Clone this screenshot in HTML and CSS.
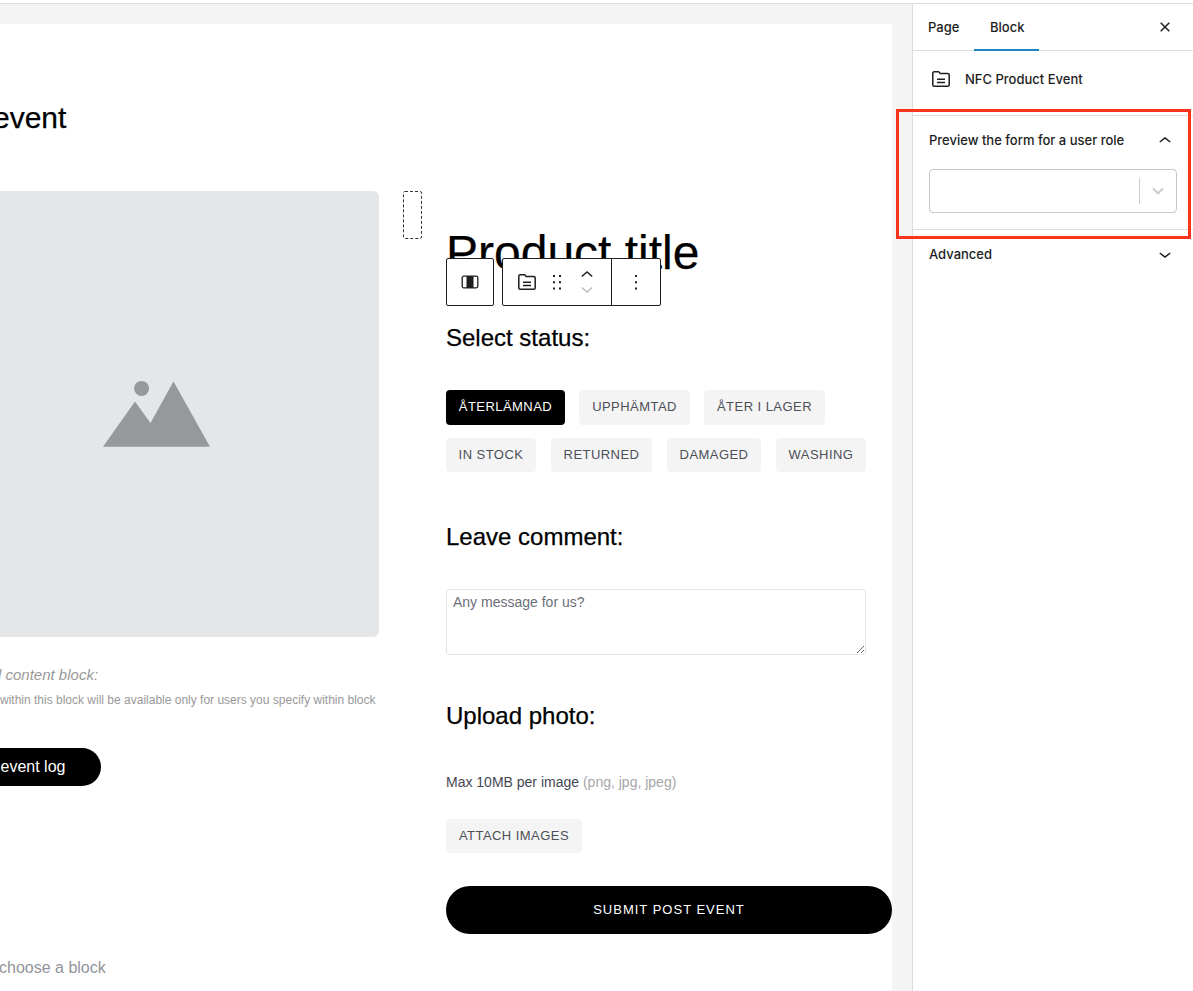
FILE: index.html
```html
<!DOCTYPE html>
<html lang="en">
<head>
<meta charset="utf-8">
<title>Edit page</title>
<link rel="stylesheet" href="styles.css">
</head>
<body>
<header class="topbar"></header>
<div class="editor">
  <main class="canvas">
    <div class="page">
      <h2 class="page-title">event</h2>
      <div class="columns">
        <section class="col-media">
          <div class="placeholder">
            <svg class="placeholder-art" width="107" height="67" viewBox="0 0 107 67"><circle cx="38.6" cy="8.4" r="7.5"/><path d="M0 66.8 32 21.5 47.5 43 70.5 1.500 107 66.800Z"/></svg>
          </div>
          <p class="restricted-title">l content block:</p>
          <p class="restricted-note">within this block will be available only for users you specify within block</p>
          <button class="log-button">event log</button>
          <p class="appender">choose a block</p>
        </section>
        <div class="empty-column"><svg width="19" height="48" viewBox="0 0 19 48"><rect x=".5" y=".5" width="18" height="47" rx="1.500"/></svg></div>
        <section class="col-form">
          <h1 class="product-title">Product title</h1>
          <div class="toolbar">
            <div class="tool-group tool-parent">
              <svg width="18" height="14" viewBox="0 0 18 14"><rect x="1.200" y="1.200" width="15.600" height="11.600" rx="1.500" fill="none" stroke="#1e1e1e" stroke-width="1.300"/><path d="M5.500 1h7v12h-7z" fill="#1e1e1e"/></svg>
            </div>
            <div class="tool-group tool-main">
              <div class="tool-block">
                <svg class="folder" width="20" height="18" viewBox="0 0 20 18"><path class="line" d="M1.800 3.200q0-1.500 1.500-1.500h4q.6 0 1 .6l.8 1.200h7.600q1.500 0 1.500 1.500v9.800q0 1.500-1.500 1.500H3.300q-1.500 0-1.500-1.500z"/><path class="line" d="M6 9.200h8M6 12.500h8"/></svg>
                <svg width="10" height="15" viewBox="0 0 10 15"><path d="M1 0h2v2H1zM7 0h2v2H7zM1 6.300h2v2H1zM7 6.300h2v2H7zM1 12.500h2v2H1zM7 12.500h2v2H7z" fill="#1e1e1e"/></svg>
                <svg class="movers" width="12" height="24" viewBox="0 0 12 24"><path class="line" d="M.8 6.500 6 2l5.200 4.500"/><path class="line faded" d="M.8 17.500 6 22l5.200-4.500"/></svg>
              </div>
              <div class="tool-more"><svg width="4" height="15" viewBox="0 0 4 15"><path d="M1 0h2v2H1zM1 6.300h2v2H1zM1 12.500h2v2H1z" fill="#1e1e1e"/></svg></div>
            </div>
          </div>
          <h3 class="section-title status-title">Select status:</h3>
          <div class="chips chips-first">
            <button class="chip chip-active">ÅTERLÄMNAD</button>
            <button class="chip chip-picked">UPPHÄMTAD</button>
            <button class="chip chip-restock">ÅTER I LAGER</button>
          </div>
          <div class="chips chips-second">
            <button class="chip chip-stock">IN STOCK</button>
            <button class="chip chip-returned">RETURNED</button>
            <button class="chip chip-damaged">DAMAGED</button>
            <button class="chip chip-washing">WASHING</button>
          </div>
          <h3 class="section-title comment-title">Leave comment:</h3>
          <textarea class="comment" placeholder="Any message for us?"></textarea>
          <h3 class="section-title upload-title">Upload photo:</h3>
          <p class="hint">Max 10MB per image <span class="hint-types">(png, jpg, jpeg)</span></p>
          <button class="chip attach">ATTACH IMAGES</button>
          <button class="submit">SUBMIT POST EVENT</button>
        </section>
      </div>
    </div>
  </main>
  <aside class="sidebar">
    <nav class="tabs">
      <a class="tab tab-page">Page</a>
      <a class="tab tab-block">Block</a>
      <svg class="close" width="10" height="10" viewBox="0 0 10 10"><path class="line" d="M.7.7l8.600 8.600M9.300.7.7 9.300"/></svg>
    </nav>
    <div class="block-card">
      <svg class="folder" width="20" height="18" viewBox="0 0 20 18"><path class="line" d="M1.800 3.200q0-1.500 1.500-1.500h4q.6 0 1 .6l.8 1.200h7.600q1.500 0 1.500 1.500v9.800q0 1.500-1.500 1.500H3.300q-1.500 0-1.500-1.500z"/><path class="line" d="M6 9.200h8M6 12.500h8"/></svg>
      <span class="block-name">NFC Product Event</span>
    </div>
    <section class="panel panel-role">
      <div class="panel-head"><span class="role-label">Preview the form for a user role</span><svg width="12" height="7" viewBox="0 0 12 7"><path class="line" d="M.8 5 6 .9l5.200 4.100"/></svg></div>
      <div class="select"><div class="select-arrow"><svg width="12" height="8" viewBox="0 0 12 8"><path d="M1.500 2 6 6.300l4.500-4.300"/></svg></div></div>
    </section>
    <section class="panel panel-advanced">
      <div class="panel-head"><span class="advanced-label">Advanced</span><svg width="12" height="7" viewBox="0 0 12 7"><path class="line" d="M.8 2 6 6.100l5.200-4.100"/></svg></div>
    </section>
  </aside>
</div>
<div class="highlight"></div>
</body>
</html>
```
FILE: styles.css
```css
* { box-sizing: border-box; }
body { margin: 0; width: 1193px; height: 991px; overflow: hidden; position: relative; background: #fff; font-family: "Liberation Sans", Arial, sans-serif; color: #000; }
h1, h2, h3, p { margin: 0; font-weight: 400; white-space: nowrap; }
h1, h2, h3 { -webkit-text-stroke: .25px #000; }
button { border: 0; padding: 0; font-family: inherit; text-align: center; white-space: nowrap; }
svg { display: block; flex: none; }
.line { fill: none; stroke: #1e1e1e; stroke-width: 1.5; }
.faded { stroke: #bbb; }
.topbar { height: 4px; border-bottom: 1px solid #ddd; }
.editor { display: flex; height: 987px; }
.canvas { width: 912px; padding: 20px 20px 0 0; background: #f4f4f4; overflow: hidden; }
.page { height: 967px; padding-top: 76px; background: #fff; }
.page-title { margin-left: -7px; font-size: 30px; line-height: 36px; }
.columns { display: flex; gap: 24px; margin-top: 55px; }

.col-media { width: 379px; flex: none; }
.placeholder { display: flex; height: 446px; padding: 189px 0 0 103px; background: #e5e6e8; border-radius: 0 6px 6px 0; }
.placeholder-art { fill: #97989b; }
.restricted-title { margin: 28px 0 0 -2px; font-size: 15px; line-height: 20px; font-style: italic; color: #999; }
.restricted-note { margin-top: 7px; font-size: 12px; line-height: 16px; color: #999; }
.log-button { display: block; width: 101px; height: 38px; margin-top: 40px; padding-right: 35px; border-radius: 0 19px 19px 0; background: #000; color: #fff; font-size: 16px; }
.appender { margin: 172px 0 0 -1px; font-size: 16px; line-height: 20px; color: #919499; }
.empty-column { width: 19px; flex: none; }
.empty-column rect { fill: none; stroke: #333; stroke-width: 1; stroke-dasharray: 3 2; }

.col-form { position: relative; width: 446px; padding-top: 38px; flex: none; }
.product-title { font-size: 48px; line-height: 48px; }
.section-title { font-size: 24px; line-height: 28px; }
.status-title { margin-top: 47px; }
.chips { display: flex; }
.chips-first { margin-top: 38px; gap: 14px; }
.chips-second { margin-top: 13px; gap: 15px; }
.chip { display: block; height: 34px; padding-bottom: 1px; border-radius: 4px; background: #f4f4f4; color: #4c4f58; font-size: 13px; letter-spacing: .45px; }
.chips-first .chip { height: 35px; padding-bottom: 2px; }
.chips-first .chip-active { width: 119px; background: #000; color: #fff; }
.chip-picked { width: 111px; }
.chip-restock { width: 121px; }
.chip-stock { width: 90px; }
.chip-returned { width: 101px; }
.chip-damaged { width: 94px; }
.chip-washing { width: 90px; }
.comment-title { margin-top: 51px; }
.comment { display: block; width: 420px; height: 66px; margin-top: 38px; padding: 4px 6px; border: 1px solid #e5e6e8; border-radius: 3px; background: #fff; font: 14px/17px "Liberation Sans", Arial, sans-serif; resize: both; }
.comment::placeholder { color: #6b7078; }
.upload-title { margin-top: 47px; }
.hint { margin-top: 42px; font-size: 14px; line-height: 20px; color: #444752; }
.hint-types { color: #a5a6aa; }
.attach { width: 136px; margin-top: 27px; }
.submit { display: block; width: 446px; height: 48px; margin-top: 33px; padding-bottom: 2px; border-radius: 24px; background: #000; color: #fff; font-size: 13px; letter-spacing: 1px; }

.toolbar { position: absolute; top: 67px; left: 0; display: flex; gap: 8px; height: 48px; }
.tool-group { display: flex; border: 1px solid #1e1e1e; border-radius: 2px; background: #fff; }
.tool-parent { width: 48px; align-items: center; justify-content: center; }
.tool-main { width: 159px; }
.tool-block { display: flex; align-items: center; width: 109px; padding-left: 14px; gap: 15px; border-right: 1px solid #1e1e1e; }
.movers { margin-left: 4px; }
.tool-more { flex: 1; display: flex; align-items: center; justify-content: center; }

.sidebar { width: 281px; border-left: 1px solid #ddd; background: #fff; color: #1e1e1e; font: 500 13px/16px Inter, sans-serif; }
.tabs { display: flex; height: 47px; border-bottom: 1px solid #ddd; }
.tab { height: 47px; padding-top: 15px; }
.tab-page { width: 61px; padding-left: 15px; }
.tab-block { width: 65px; padding-left: 16px; border-bottom: 2px solid #1b86be; }
.close { margin: 18px 0 0 121px; }
.block-card { display: flex; height: 64px; padding: 19px 0 0 18px; gap: 14px; }
.block-name { padding-top: 1px; }
.panel { border-top: 1px solid #ddd; padding: 16px 16px 0; }
.panel-role { height: 114px; }
.panel-advanced { height: 60px; }
.panel-head { display: flex; justify-content: space-between; align-items: center; height: 16px; padding-right: 6px; }
.select { display: flex; justify-content: flex-end; align-items: center; height: 44px; margin-top: 21px; border: 1px solid #c8c8c8; border-radius: 4px; }
.select-arrow { display: flex; align-items: center; justify-content: center; width: 37px; height: 26px; border-left: 1px solid #ccc; }
.select-arrow path { fill: none; stroke: #ccc; stroke-width: 2; stroke-linecap: round; }
.highlight { position: absolute; left: 896px; top: 109px; width: 295px; height: 130px; border: 3px solid #f9331d; pointer-events: none; }
```
